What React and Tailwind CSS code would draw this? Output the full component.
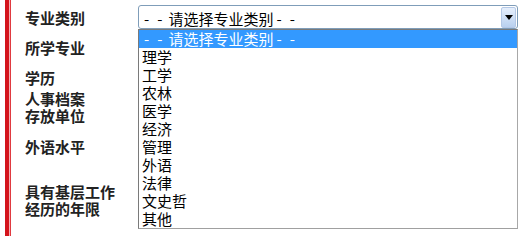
import React from "react";

const items = ["理学", "工学", "农林", "医学", "经济", "管理", "外语", "法律", "文史哲", "其他"];

function Lead() {
  return (
    <>
      <span className="mr-[8px]">-</span>
      <span className="mr-[6px]">-</span>
    </>
  );
}

function Trail() {
  return (
    <>
      <span className="ml-[3px] mr-[8px]">-</span>
      <span>-</span>
    </>
  );
}

export default function App() {
  return (
    <div className="relative w-[525px] h-[236px] bg-white overflow-hidden" style={{ fontFamily: '"Noto Sans CJK SC", sans-serif' }}>
      <div className="flex h-full">
        <div className="w-[5px]" />
        <div className="w-[4px] h-full bg-[#d4141c]" />
        <div className="w-[1px] h-full bg-[#f4b0b4]" />
        <div className="w-[1px] h-full bg-[#e03a40]" />
        <div className="flex flex-col pl-[14px] pt-[9px] text-[15px] leading-[17px] font-bold text-[#222]">
          <div>专业类别</div>
          <div className="mt-[13px]">所学专业</div>
          <div className="mt-[13px]">学历</div>
          <div className="mt-[4px]">人事档案<br />存放单位</div>
          <div className="mt-[14px]">外语水平</div>
          <div className="mt-[28px]">具有基层工作<br />经历的年限</div>
        </div>
      </div>

      <div className="absolute left-[138px] top-[5px] w-[380px] h-[24px] border border-[#7f9db9] rounded-[3px] bg-white flex items-center">
        <div className="flex-1 pl-[5px] pt-[3px] text-[15px] leading-[18px] text-black whitespace-nowrap">
          <Lead />请选择专业类别<Trail />
        </div>
        <div className="w-[15px] h-[21px] mr-[1px] rounded-[2px] bg-gradient-to-b from-[#e6effc] to-[#b9d0ef] border border-[#b4c8e6] flex items-center justify-center">
          <svg width="8" height="5" viewBox="0 0 8 5"><path d="M0 0h8L4 5z" fill="#000" /></svg>
        </div>
      </div>

      <div className="absolute left-[138px] top-[29px] w-[380px] border border-[#7a7a7a] border-r-[#a8a8a8] border-b-[#a0a0a0] bg-white text-[15px] leading-[18px] text-black">
        <div className="h-[18px] bg-[#3399ff] text-white pl-[5px] whitespace-nowrap">
          <Lead />请选择专业类别<Trail />
        </div>
        {items.map((t) => (
          <div key={t} className="h-[18px] pl-[3px]">{t}</div>
        ))}
      </div>
    </div>
  );
}
